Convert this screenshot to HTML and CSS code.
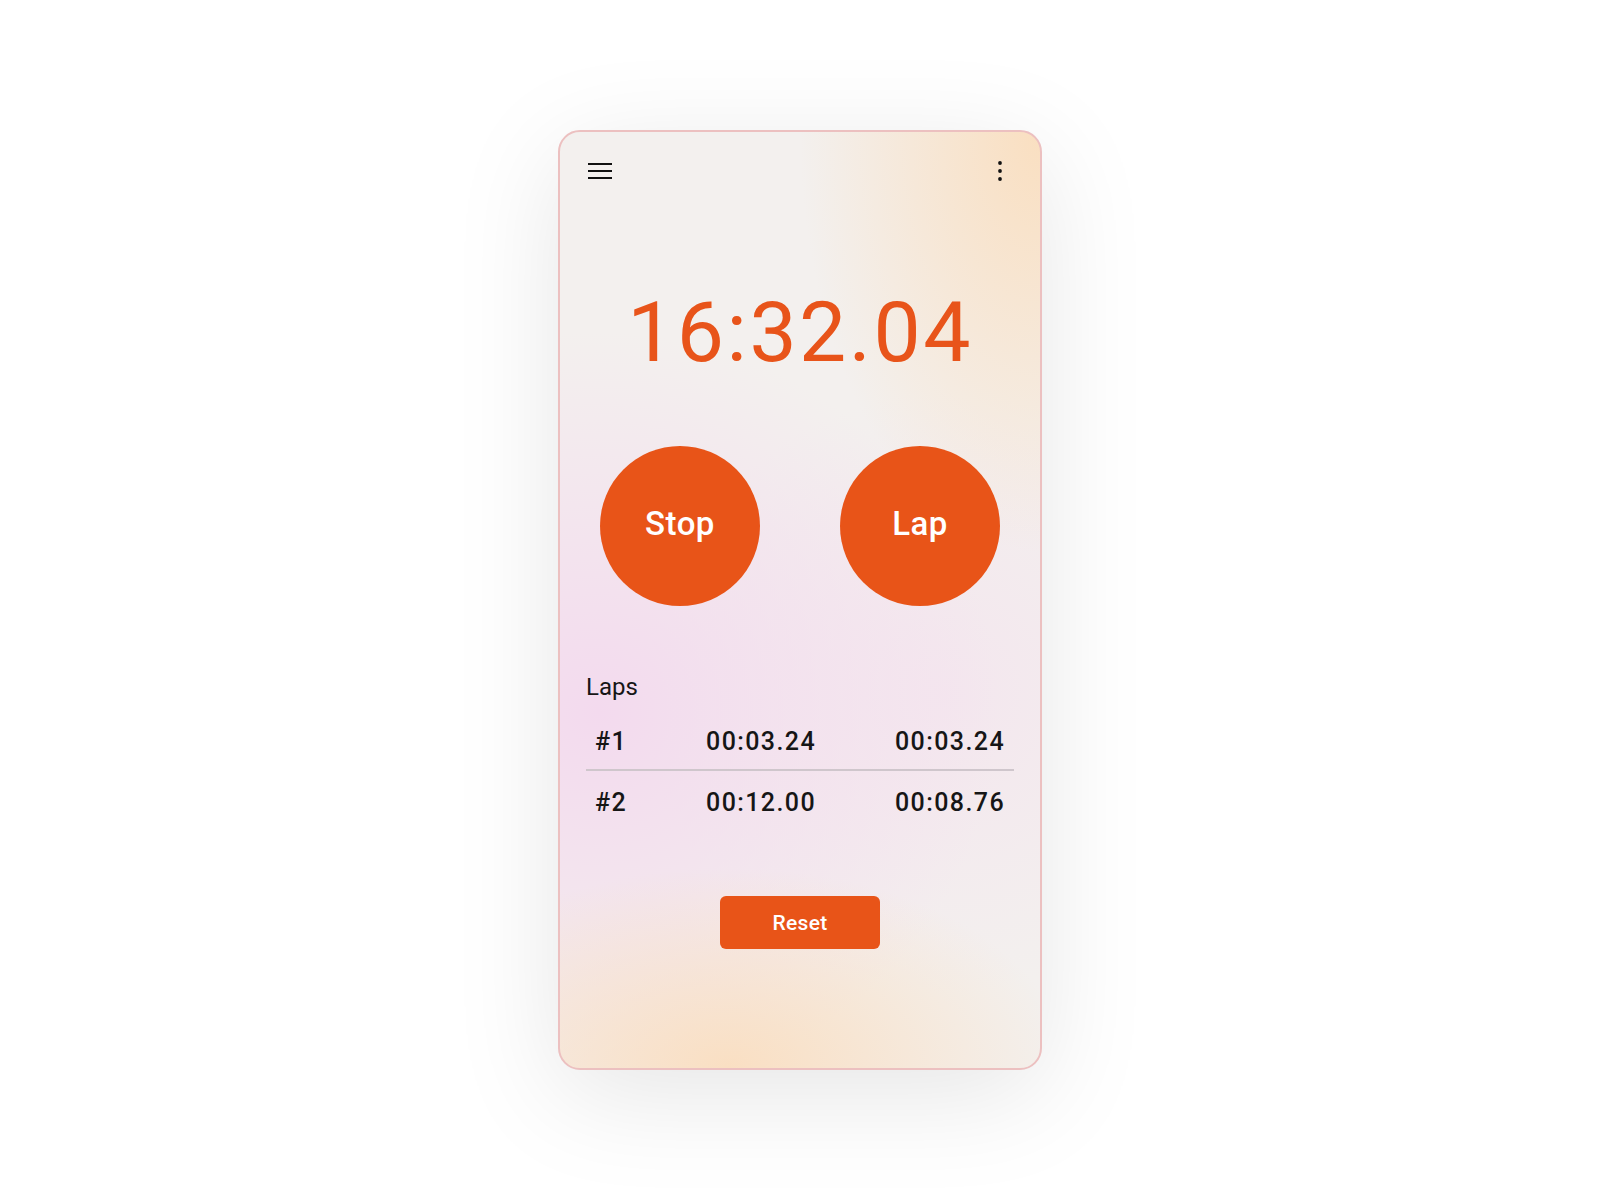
FILE: index.html
```html
<!DOCTYPE html>
<html lang="en">
<head>
<meta charset="utf-8">
<title>Stopwatch</title>
<link rel="stylesheet" href="styles.css">
</head>
<body>
<main class="stage">
  <section class="phone">
    <header class="topbar">
      <svg class="icon" width="24" height="24" viewBox="0 0 24 24" aria-label="Menu">
        <rect x="0" y="4" width="24" height="2" fill="#111"/>
        <rect x="0" y="11" width="24" height="2" fill="#111"/>
        <rect x="0" y="18" width="24" height="2" fill="#111"/>
      </svg>
      <svg class="icon" width="24" height="24" viewBox="0 0 24 24" aria-label="More">
        <circle cx="12" cy="4" r="1.9" fill="#111"/>
        <circle cx="12" cy="12" r="1.9" fill="#111"/>
        <circle cx="12" cy="20" r="1.9" fill="#111"/>
      </svg>
    </header>

    <div class="timer">16:32.04</div>

    <div class="controls">
      <button class="round">Stop</button>
      <button class="round">Lap</button>
    </div>

    <div class="laps">
      <div class="laps-title">Laps</div>
      <div class="lap-row first">
        <span>#1</span><span>00:03.24</span><span>00:03.24</span>
      </div>
      <div class="lap-row second">
        <span>#2</span><span>00:12.00</span><span>00:08.76</span>
      </div>
    </div>

    <div class="reset-wrap">
      <button class="reset">Reset</button>
    </div>
  </section>
</main>
</body>
</html>
```

FILE: styles.css
```css
* { box-sizing: border-box; }

html, body {
  margin: 0;
  padding: 0;
  background: #ffffff;
}

body {
  font-family: Roboto, "Noto Sans", "Liberation Sans", sans-serif;
  color: #161616;
}

.stage {
  width: 1600px;
  height: 1200px;
  display: flex;
  align-items: center;
  justify-content: center;
}

.phone {
  width: 484px;
  height: 940px;
  border: 2px solid #ecc0c0;
  border-radius: 22px;
  box-shadow: 0 24px 110px rgba(0, 0, 0, 0.10);
  background:
    radial-gradient(ellipse 240px 420px at 100% 0%, rgba(250, 222, 190, 0.95), rgba(250, 222, 190, 0) 100%),
    radial-gradient(ellipse 340px 200px at 35% 100%, rgba(250, 222, 192, 0.95), rgba(250, 222, 192, 0) 100%),
    radial-gradient(ellipse 400px 380px at 8% 62%, rgba(243, 218, 238, 1), rgba(243, 218, 238, 0) 100%),
    radial-gradient(ellipse 300px 300px at 80% 60%, rgba(244, 228, 238, 0.8), rgba(244, 228, 238, 0) 100%),
    #f3f0ee;
  display: flex;
  flex-direction: column;
  padding: 0 26px;
}

.topbar {
  display: flex;
  justify-content: space-between;
  align-items: center;
  padding-top: 27px;
  padding-left: 2px;
  padding-right: 2px;
}

.icon { display: block; }

.timer {
  margin-top: 108px;
  text-align: center;
  font-size: 84px;
  line-height: 84px;
  font-weight: 400;
  color: #e8541a;
  letter-spacing: 2.5px;
}

.controls {
  margin-top: 71px;
  display: flex;
  justify-content: center;
  gap: 80px;
}

.round {
  width: 160px;
  height: 160px;
  border-radius: 50%;
  border: none;
  background: #e85418;
  color: #ffffff;
  font-family: Roboto, "Noto Sans", sans-serif;
  font-size: 33px;
  font-weight: 500;
  letter-spacing: 0.5px;
  padding: 0 0 5px 0;
}

.laps {
  margin-top: 65px;
  display: flex;
  flex-direction: column;
}

.laps-title {
  font-size: 24px;
  line-height: 32px;
  font-weight: 400;
  color: #161616;
}

.lap-row {
  display: flex;
  justify-content: space-between;
  align-items: center;
  height: 58px;
  padding: 0 9px;
  font-size: 25px;
  font-weight: 500;
  letter-spacing: 1.4px;
  color: #161616;
}

.lap-row.first {
  margin-top: 10px;
  border-bottom: 2px solid #cfc6cc;
}

.lap-row.second {
  padding-top: 4px;
}

.reset-wrap {
  margin-top: 67px;
  display: flex;
  justify-content: center;
}

.reset {
  width: 160px;
  height: 53px;
  border: none;
  border-radius: 6px;
  background: #e85418;
  color: #ffffff;
  font-family: Roboto, "Noto Sans", sans-serif;
  font-size: 21px;
  font-weight: 500;
  letter-spacing: 0.3px;
}
```
